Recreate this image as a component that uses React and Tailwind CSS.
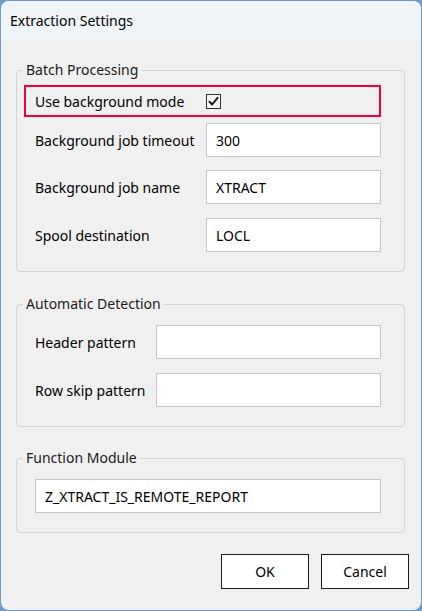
import React from 'react';

const font = { fontFamily: '"Segoe UI", "Noto Sans", "Open Sans", sans-serif' };

const Field = ({ label, value, inputClass, className }) => (
  <div className={`flex items-center pl-[11px] ${className || ''}`}>
    <span className="text-[14px] text-black">{label}</span>
    <div className={`ml-auto h-[34px] bg-white border border-[#c6c6c6] flex items-center pl-[9px] text-[14px] text-black ${inputClass}`}>
      {value}
    </div>
  </div>
);

const Group = ({ title, children, className }) => (
  <fieldset className={`mx-[15px] mr-[16px] border border-[#d4d4d4] rounded-[4px] pl-[7px] pr-[23px] ${className || ''}`}>
    <legend className="-ml-[1px] px-[3px] text-[14px] leading-[20px] text-[#1b1b1b]">{title}</legend>
    {children}
  </fieldset>
);

const App = () => {
  return (
    <div className="w-[422px] h-[611px] bg-[#6f9bc6] p-px" style={font}>
      <div className="w-full h-full rounded-[8px] overflow-hidden bg-[#f0f0f0] flex flex-col">
        <div className="h-[39px] bg-[#eff4f9] flex items-center pl-[9px] text-[14px] text-black">
          Extraction Settings
        </div>

        <Group title="Batch Processing" className="mt-[20px] pb-[19px]">
          <div className="mt-[5px] h-[32px] border-2 border-[#f0003c] flex items-center pl-[9px]">
            <span className="text-[14px] text-black">Use background mode</span>
            <div className="ml-[22px] w-[15px] h-[15px] border border-[#333] bg-[#f7f7f7] flex items-center justify-center">
              <svg width="11" height="11" viewBox="0 0 11 11">
                <path d="M1.5 5.8 L4.2 8.5 L9.5 1.8" fill="none" stroke="#1a1a1a" strokeWidth="2" strokeLinejoin="round" strokeLinecap="round" />
              </svg>
            </div>
          </div>
          <Field label="Background job timeout" value="300" inputClass="w-[175px]" className="mt-[6px]" />
          <Field label="Background job name" value="XTRACT" inputClass="w-[175px]" className="mt-[13px]" />
          <Field label="Spool destination" value="LOCL" inputClass="w-[175px]" className="mt-[14px]" />
        </Group>

        <Group title="Automatic Detection" className="mt-[22px] pb-[19px]">
          <Field label="Header pattern" value="" inputClass="w-[225px]" className="mt-[11px]" />
          <Field label="Row skip pattern" value="" inputClass="w-[225px]" className="mt-[14px]" />
        </Group>

        <Group title="Function Module" className="mt-[21px] pb-[19px]">
          <div className="mt-[11px] ml-[11px] h-[34px] bg-white border border-[#c6c6c6] flex items-center pl-[9px] text-[14px] text-black">
            Z_XTRACT_IS_REMOTE_REPORT
          </div>
        </Group>

        <div className="mt-[21px] flex justify-end gap-[12px] pr-[12px]">
          <button className="w-[88px] h-[35px] bg-white border border-[#1a1a1a] text-[14px] text-black">OK</button>
          <button className="w-[88px] h-[35px] bg-white border border-[#1a1a1a] text-[14px] text-black">Cancel</button>
        </div>
      </div>
    </div>
  );
};

export default App;
